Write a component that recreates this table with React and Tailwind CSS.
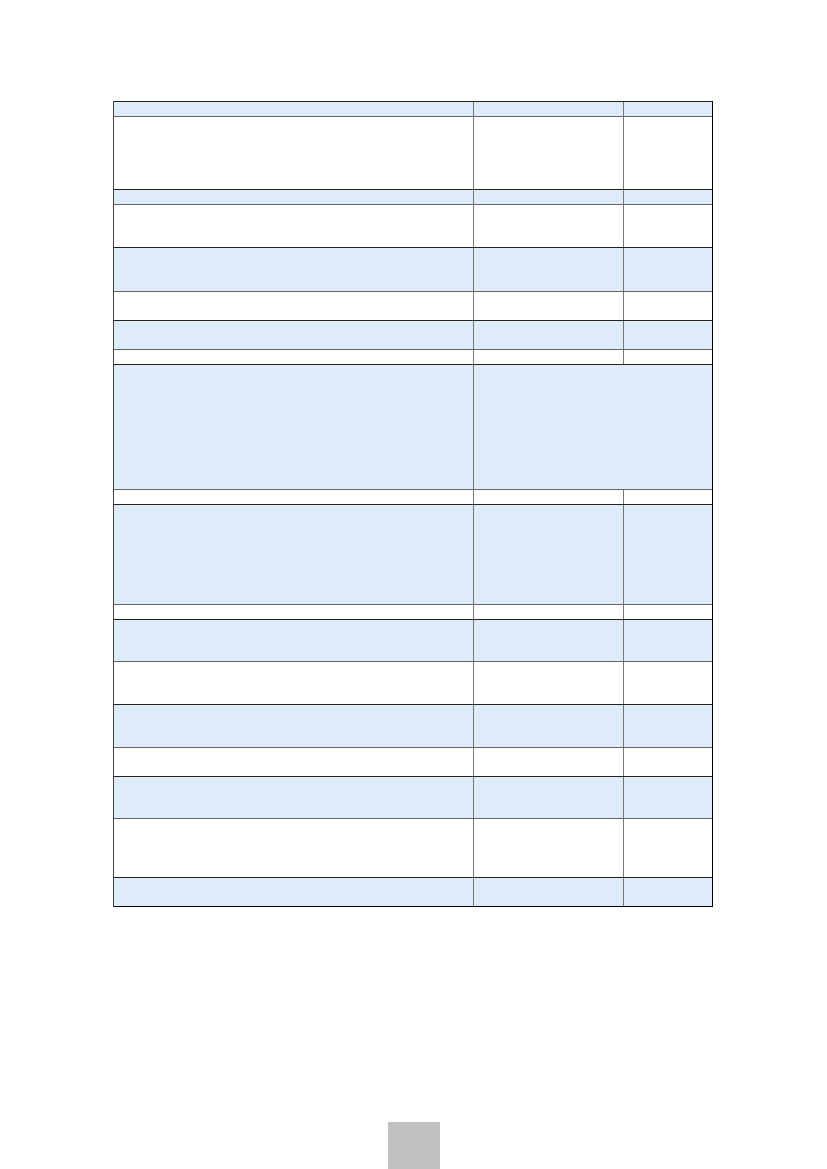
import React from 'react';

const rows = [
  { h: 15, blue: true },
  { h: 73, blue: false },
  { h: 15, blue: true },
  { h: 43, blue: false },
  { h: 44, blue: true },
  { h: 29, blue: false },
  { h: 29, blue: true },
  { h: 15, blue: false },
  { h: 125, blue: true, merged: true },
  { h: 15, blue: false },
  { h: 100, blue: true },
  { h: 15, blue: false },
  { h: 42, blue: true },
  { h: 43, blue: false },
  { h: 43, blue: true },
  { h: 29, blue: false },
  { h: 42, blue: true },
  { h: 59, blue: false },
  { h: 29, blue: true },
];

const heights = {
  15: 'h-[15px]',
  29: 'h-[29px]',
  42: 'h-[42px]',
  43: 'h-[43px]',
  44: 'h-[44px]',
  59: 'h-[59px]',
  73: 'h-[73px]',
  100: 'h-[100px]',
  125: 'h-[125px]',
};

const App = () => {
  return (
    <div className="w-[827px] h-[1169px] bg-white flex flex-col overflow-hidden">
      <div className="mt-[101px] ml-[113px] w-[600px] border-l border-l-[#444] border-r border-r-black border-b border-b-black">
        {rows.map((row, i) => (
          <div
            key={i}
            className={
              'box-border flex border-t ' +
              (row.blue ? 'border-t-[#222] bg-[#deebf8] ' : 'border-t-[#666] bg-white ') +
              heights[row.h]
            }
          >
            <div className="w-[360px] border-r border-r-[#777]"></div>
            {row.merged ? (
              <div className="flex-1"></div>
            ) : (
              <>
                <div className="w-[150px] border-r border-r-[#777]"></div>
                <div className="flex-1"></div>
              </>
            )}
          </div>
        ))}
      </div>
      <div className="mt-auto mx-auto w-[52px] h-[47px] bg-[#c0c0c0]"></div>
    </div>
  );
};

export default App;
